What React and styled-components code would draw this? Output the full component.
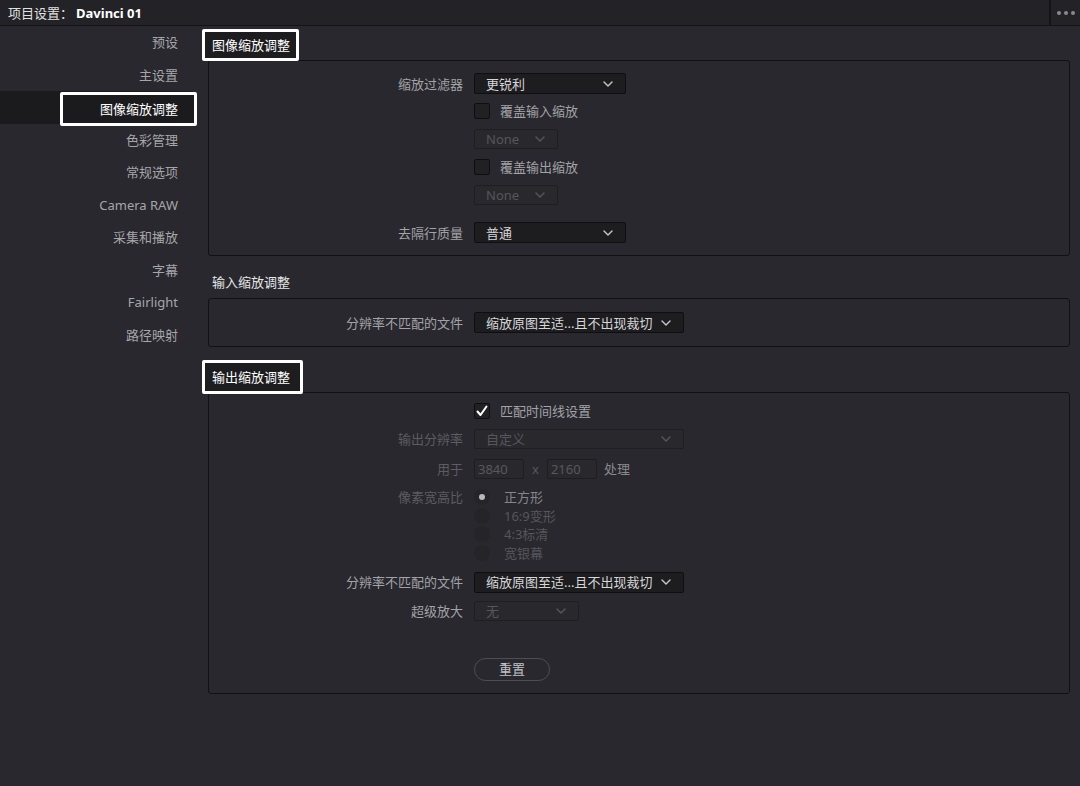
import React from 'react';
import styled, { createGlobalStyle } from 'styled-components';

const GlobalStyle = createGlobalStyle`
  html, body {
    margin: 0;
    padding: 0;
    background: #28282e;
  }
  * {
    box-sizing: border-box;
  }
  body {
    font-family: 'Noto Sans', 'Noto Sans CJK SC', sans-serif;
    font-size: 13px;
    line-height: 16px;
    color: #a8a8ac;
  }
`;

const Page = styled.div`
  width: 1080px;
  height: 786px;
  display: flex;
  flex-direction: column;
  background: #28282e;
  overflow: hidden;
`;

const TitleBar = styled.div`
  height: 26px;
  flex-shrink: 0;
  display: flex;
  align-items: stretch;
  background: #222227;
  border-bottom: 1px solid #141417;
`;

const Title = styled.div`
  flex: 1;
  display: flex;
  align-items: center;
  padding-left: 8px;
  font-size: 13px;
  color: #e2e2e2;

  b {
    color: #ffffff;
    font-weight: 700;
    margin-left: 3px;
  }
`;

const MenuButton = styled.div`
  width: 31px;
  border-left: 2px solid #141417;
  display: flex;
  align-items: center;
  justify-content: center;
  gap: 3px;

  span {
    width: 4px;
    height: 4px;
    border-radius: 50%;
    background: #8a8a8e;
  }
`;

const Body = styled.div`
  flex: 1;
  display: flex;
`;

const Sidebar = styled.nav`
  width: 200px;
  flex-shrink: 0;
  display: flex;
  flex-direction: column;
`;

const NavItem = styled.div`
  height: 32.5px;
  width: 192px;
  display: flex;
  align-items: center;
  justify-content: flex-end;
  padding-right: 14px;
  color: ${p => (p.$active ? '#ffffff' : '#a6a6aa')};
  background: ${p => (p.$active ? '#1b1b1e' : 'transparent')};
  position: relative;
  white-space: nowrap;
`;

const NavMark = styled.span`
  position: absolute;
  left: 60px;
  right: -5px;
  top: 1px;
  bottom: -2px;
  border: 3px solid #ffffff;
  border-radius: 2px;
  background: #1b1b1e;
  display: flex;
  align-items: center;
  justify-content: flex-end;
  padding-right: 16px;
`;

const Main = styled.main`
  flex: 1;
  padding: 0 10px 0 8px;
  display: flex;
  flex-direction: column;
`;

const SectionHead = styled.div`
  height: ${p => p.$h}px;
  display: flex;
  align-items: flex-end;
  padding-bottom: ${p => p.$pb}px;
  color: #e6e6e6;
`;

const HeadText = styled.span`
  margin-left: 4px;
`;

const HeadMark = styled.span`
  display: inline-flex;
  align-items: center;
  height: ${p => p.$h}px;
  padding: 0 ${p => p.$pr}px 0 7px;
  margin-left: -6px;
  margin-bottom: ${p => p.$mb}px;
  border: 3px solid #ffffff;
  border-radius: 2px;
  background: #1d1d20;
  color: #ffffff;
  position: relative;
  z-index: 1;
`;

const Panel = styled.section`
  border: 1.5px solid #111114;
  border-radius: 3px;
  padding: ${p => p.$pt}px 0 ${p => p.$pb}px;
  display: flex;
  flex-direction: column;
`;

const Row = styled.div`
  display: grid;
  grid-template-columns: 254px 1fr;
  column-gap: 11px;
  align-items: ${p => (p.$top ? 'start' : 'center')};
  margin-top: ${p => p.$mt || 0}px;
`;

const Label = styled.div`
  text-align: right;
  color: ${p => (p.$disabled ? '#5c5c61' : '#a3a3a7')};
  white-space: nowrap;
`;

const Controls = styled.div`
  display: flex;
  align-items: center;
`;

const Select = styled.div`
  width: ${p => p.$w}px;
  height: ${p => p.$h}px;
  display: flex;
  align-items: center;
  justify-content: space-between;
  padding: 0 12px 0 11px;
  border-radius: 2px;
  background: ${p => (p.$disabled ? '#29292d' : '#1d1d20')};
  border: 1px solid ${p => (p.$disabled ? '#1f1f22' : '#0f0f11')};
  color: ${p => (p.$disabled ? '#56565b' : '#d6d6d8')};
  white-space: nowrap;

  svg {
    flex-shrink: 0;
    stroke: ${p => (p.$disabled ? '#56565b' : '#c8c8cc')};
  }
`;

const CheckRow = styled.label`
  height: 16px;
  display: flex;
  align-items: center;
  gap: 10px;
  color: #a3a3a7;
`;

const Box = styled.span`
  width: 16px;
  height: 16px;
  border-radius: 2px;
  background: #212124;
  border: 1px solid #0f0f11;
  display: flex;
  align-items: center;
  justify-content: center;
`;

const NumInput = styled.div`
  width: 50px;
  height: 20px;
  display: flex;
  align-items: center;
  padding-left: 3px;
  background: #29292d;
  border: 1px solid #1e1e21;
  border-radius: 2px;
  color: #58585d;
`;

const Muted = styled.span`
  color: ${p => (p.$dim ? '#58585d' : '#8a8a8e')};
  margin: 0 ${p => p.$m}px;
`;

const RadioList = styled.div`
  display: flex;
  flex-direction: column;
  gap: 2.5px;
`;

const RadioRow = styled.div`
  height: 16px;
  display: flex;
  align-items: center;
  gap: 14px;
  color: ${p => (p.$on ? '#86868a' : '#56565b')};
`;

const Radio = styled.span`
  width: 16px;
  height: 16px;
  border-radius: 50%;
  background: #252529;
  display: flex;
  align-items: center;
  justify-content: center;

  &::after {
    content: '';
    display: ${p => (p.$on ? 'block' : 'none')};
    width: 6px;
    height: 6px;
    border-radius: 50%;
    background: #b8b8bc;
  }
`;

const ResetButton = styled.button`
  width: 76px;
  height: 23px;
  border-radius: 12px;
  border: 1px solid #4e4e53;
  background: transparent;
  color: #c2c2c6;
  font-family: inherit;
  font-size: 13px;
  line-height: 16px;
  padding: 0;
  cursor: pointer;
`;

const Chevron = () => (
  <svg width="10" height="6" viewBox="0 0 10 6" fill="none" strokeWidth="1.4" strokeLinecap="round" strokeLinejoin="round">
    <path d="M1 1l4 4 4-4" />
  </svg>
);

const Check = () => (
  <svg width="12" height="12" viewBox="0 0 12 12" fill="none" stroke="#ffffff" strokeWidth="2" strokeLinecap="round" strokeLinejoin="round">
    <path d="M1.5 6.5l3 3.5L10.5 1.5" />
  </svg>
);

const navItems = ['预设', '主设置', '图像缩放调整', '色彩管理', '常规选项', 'Camera RAW', '采集和播放', '字幕', 'Fairlight', '路径映射'];

const aspects = ['正方形', '16:9变形', '4:3标清', '宽银幕'];

export default function App() {
  return (
    <Page>
      <GlobalStyle />
      <TitleBar>
        <Title>
          项目设置：<b>Davinci 01</b>
        </Title>
        <MenuButton>
          <span />
          <span />
          <span />
        </MenuButton>
      </TitleBar>

      <Body>
        <Sidebar>
          {navItems.map(item =>
            item === '图像缩放调整' ? (
              <NavItem key={item} $active>
                <NavMark>{item}</NavMark>
              </NavItem>
            ) : (
              <NavItem key={item}>{item}</NavItem>
            )
          )}
        </Sidebar>

        <Main>
          <SectionHead $h={34} $pb={0}>
            <HeadMark $h={32} $pr={6} $mb={-1}>图像缩放调整</HeadMark>
          </SectionHead>
          <Panel $pt={12} $pb={12}>
            <Row>
              <Label>缩放过滤器</Label>
              <Controls>
                <Select $w={152} $h={21}>更锐利<Chevron /></Select>
              </Controls>
            </Row>
            <Row $mt={9}>
              <span />
              <CheckRow><Box />覆盖输入缩放</CheckRow>
            </Row>
            <Row $mt={10}>
              <span />
              <Controls>
                <Select $w={84} $h={20} $disabled>None<Chevron /></Select>
              </Controls>
            </Row>
            <Row $mt={10}>
              <span />
              <CheckRow><Box />覆盖输出缩放</CheckRow>
            </Row>
            <Row $mt={10}>
              <span />
              <Controls>
                <Select $w={84} $h={20} $disabled>None<Chevron /></Select>
              </Controls>
            </Row>
            <Row $mt={17}>
              <Label>去隔行质量</Label>
              <Controls>
                <Select $w={152} $h={21}>普通<Chevron /></Select>
              </Controls>
            </Row>
          </Panel>

          <SectionHead $h={42} $pb={8}>
            <HeadText>输入缩放调整</HeadText>
          </SectionHead>
          <Panel $pt={13} $pb={13}>
            <Row>
              <Label>分辨率不匹配的文件</Label>
              <Controls>
                <Select $w={210} $h={21}>缩放原图至适...且不出现裁切<Chevron /></Select>
              </Controls>
            </Row>
          </Panel>

          <SectionHead $h={45} $pb={0}>
            <HeadMark $h={34} $pr={10} $mb={-2}>输出缩放调整</HeadMark>
          </SectionHead>
          <Panel $pt={10} $pb={12}>
            <Row>
              <span />
              <CheckRow>
                <Box><Check /></Box>
                匹配时间线设置
              </CheckRow>
            </Row>
            <Row $mt={10}>
              <Label $disabled>输出分辨率</Label>
              <Controls>
                <Select $w={210} $h={20} $disabled>自定义<Chevron /></Select>
              </Controls>
            </Row>
            <Row $mt={10}>
              <Label $disabled>用于</Label>
              <Controls>
                <NumInput>3840</NumInput>
                <Muted $dim $m={8}>x</Muted>
                <NumInput>2160</NumInput>
                <Muted $m={7}>处理</Muted>
              </Controls>
            </Row>
            <Row $mt={10} $top>
              <Label $disabled>像素宽高比</Label>
              <RadioList>
                {aspects.map((a, i) => (
                  <RadioRow key={a} $on={i === 0}>
                    <Radio $on={i === 0} />
                    {a}
                  </RadioRow>
                ))}
              </RadioList>
            </Row>
            <Row $mt={11}>
              <Label>分辨率不匹配的文件</Label>
              <Controls>
                <Select $w={210} $h={21}>缩放原图至适...且不出现裁切<Chevron /></Select>
              </Controls>
            </Row>
            <Row $mt={8}>
              <Label>超级放大</Label>
              <Controls>
                <Select $w={105} $h={20} $disabled>无<Chevron /></Select>
              </Controls>
            </Row>
            <Row $mt={37}>
              <span />
              <Controls>
                <ResetButton>重置</ResetButton>
              </Controls>
            </Row>
          </Panel>
        </Main>
      </Body>
    </Page>
  );
}
